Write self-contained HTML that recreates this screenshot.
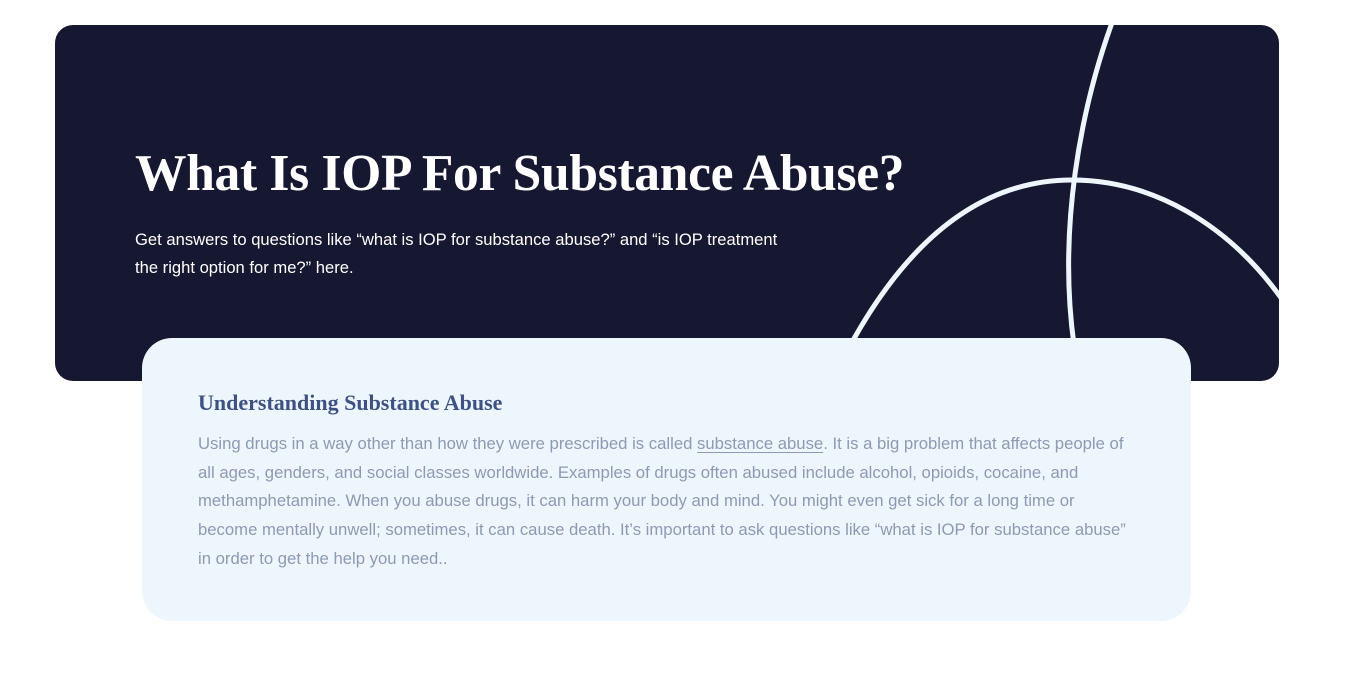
<!DOCTYPE html>
<html><head><meta charset="utf-8"><style>
body{margin:0;background:#fff;width:1350px;height:686px;position:relative;overflow:hidden}
.hero{position:absolute;left:55px;top:25px;width:1224px;height:356px;background:#161730;border-radius:18px;overflow:hidden}
.hero svg{position:absolute;left:0;top:0}
h1{position:absolute;left:80px;top:119px;margin:0;font-family:"Liberation Serif",serif;font-weight:bold;font-size:51.5px;color:#fff;letter-spacing:-0.3px;white-space:nowrap}
.sub{position:absolute;left:80px;top:201px;width:700px;font-family:"Liberation Sans",sans-serif;font-size:16.6px;line-height:28px;color:#fff;white-space:nowrap}
.card{position:absolute;left:142px;top:338px;width:1049px;height:283px;background:#eef6fd;border-radius:30px}
h2{position:absolute;left:56px;top:52px;margin:0;font-family:"Liberation Serif",serif;font-weight:bold;font-size:22px;color:#3d5183}
.body{position:absolute;left:56px;top:92px;width:960px;font-family:"Liberation Sans",sans-serif;font-size:16.7px;line-height:28.7px;color:#8e99b3;white-space:nowrap}
.body u{text-decoration-thickness:1px;text-underline-offset:3px}
</style></head><body>
<div class="hero">
<svg width="1224" height="356" viewBox="55 25 1224 356">
<path d="M851,344 C915,228 990,180 1072,180 C1150,180 1228,222 1284,302" fill="none" stroke="#eef6fd" stroke-width="5"/>
<path d="M1113,20 C1080,110 1058,230 1074,345" fill="none" stroke="#eef6fd" stroke-width="5"/>
</svg>
<h1>What Is IOP For Substance Abuse?</h1>
<div class="sub">Get answers to questions like “what is IOP for substance abuse?” and “is IOP treatment<br>the right option for me?” here.</div>
</div>
<div class="card">
<h2>Understanding Substance Abuse</h2>
<div class="body">Using drugs in a way other than how they were prescribed is called <u>substance abuse</u>. It is a big problem that affects people of<br>all ages, genders, and social classes worldwide. Examples of drugs often abused include alcohol, opioids, cocaine, and<br>methamphetamine. When you abuse drugs, it can harm your body and mind. You might even get sick for a long time or<br>become mentally unwell; sometimes, it can cause death. It’s important to ask questions like “what is IOP for substance abuse”<br>in order to get the help you need..</div>
</div>
</body></html>
